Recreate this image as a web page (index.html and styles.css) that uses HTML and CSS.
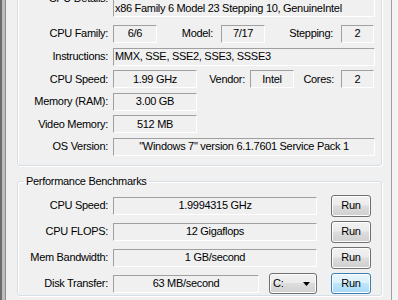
FILE: index.html
```html
<!DOCTYPE html>
<html lang="en">
<head>
  <meta charset="utf-8">
  <title>System Information</title>
  <link rel="stylesheet" href="styles.css">
</head>
<body>
<div class="window">
  <div class="edge-left"></div>
  <div class="panel">
    <!-- System details, scrolled so the heading is off the top -->
    <fieldset class="group group-system">
      <div class="rows">
        <div class="row row-top">
          <span class="lbl lbl-main lbl-high">CPU Details:</span>
          <span class="field w-full left">x86 Family 6 Model 23 Stepping 10, GenuineIntel</span>
        </div>
        <div class="row">
          <span class="lbl lbl-main">CPU Family:</span>
          <span class="field w-44">6/6</span>
          <span class="lbl lbl-model">Model:</span>
          <span class="field w-44">7/17</span>
          <span class="lbl lbl-step">Stepping:</span>
          <span class="field w-33">2</span>
        </div>
        <div class="row">
          <span class="lbl lbl-main">Instructions:</span>
          <span class="field w-full left">MMX, SSE, SSE2, SSE3, SSSE3</span>
        </div>
        <div class="row">
          <span class="lbl lbl-main">CPU Speed:</span>
          <span class="field w-84">1.99 GHz</span>
          <span class="lbl lbl-vendor">Vendor:</span>
          <span class="field w-44">Intel</span>
          <span class="lbl lbl-cores">Cores:</span>
          <span class="field w-33">2</span>
        </div>
        <div class="row">
          <span class="lbl lbl-main">Memory (RAM):</span>
          <span class="field w-84">3.00 GB</span>
        </div>
        <div class="row">
          <span class="lbl lbl-main">Video Memory:</span>
          <span class="field w-84">512 MB</span>
        </div>
        <div class="row">
          <span class="lbl lbl-main">OS Version:</span>
          <span class="field w-full">"Windows 7" version 6.1.7601 Service Pack 1</span>
        </div>
      </div>
    </fieldset>

    <fieldset class="group group-bench">
      <legend>Performance Benchmarks</legend>
      <div class="rows">
        <div class="row">
          <span class="lbl lbl-main">CPU Speed:</span>
          <span class="field w-bench">1.9994315 GHz</span>
          <button class="btn">Run</button>
        </div>
        <div class="row">
          <span class="lbl lbl-main">CPU FLOPS:</span>
          <span class="field w-bench">12 Gigaflops</span>
          <button class="btn">Run</button>
        </div>
        <div class="row">
          <span class="lbl lbl-main">Mem Bandwidth:</span>
          <span class="field w-bench">1 GB/second</span>
          <button class="btn">Run</button>
        </div>
        <div class="row">
          <span class="lbl lbl-main">Disk Transfer:</span>
          <span class="field w-146">63 MB/second</span>
          <span class="combo">C:<svg width="7" height="4" viewBox="0 0 7 4"><path d="M0 0h7L3.5 4z" fill="#000"/></svg></span>
          <button class="btn btn-focus">Run</button>
        </div>
      </div>
    </fieldset>
  </div>
  <div class="edge-right"></div>
</div>
</body>
</html>
```

FILE: styles.css
```css
* { box-sizing: border-box; }

body {
  margin: 0;
  background: #f0f0f0;
  color: #000;
  font: 11px/13px "Liberation Sans", Arial, sans-serif;
  letter-spacing: -0.3px;
}

.window {
  display: flex;
  height: 300px;
  overflow: hidden;
}
.edge-left {
  flex: none;
  width: 6px;
  background: linear-gradient(to right, #6b6b6b 0 2px, #bdbdbd 2px 5px, #8c8c8c 5px 6px);
}
.edge-right {
  flex: none;
  width: 7px;
  background: linear-gradient(to right, #a0a0a0 0 1px, #f4f4f4 1px);
}
.panel {
  flex: 1;
  padding: 0 9px 0 11px;
}

/* group boxes */
.group {
  margin: 0;
  padding: 0;
  min-width: 0;
  border: 1px solid #d5dfe5;
  border-radius: 3px;
  box-shadow: 1px 1px 0 #fff, inset 1px 1px 0 #fff;
}
.group legend {
  margin-left: 6px;
  padding: 0 2px;
  line-height: 13px;
}
.group-system {
  margin-top: -10px;
  padding: 8px 0 9px;
}
.group-system .rows { gap: 4.6px; }
.group-bench {
  margin-top: 9px;
  padding-top: 7px;
}
.group-bench .rows { gap: 4px; }
.group-bench .row { height: 22px; }

.rows {
  display: flex;
  flex-direction: column;
}
.row {
  display: flex;
  align-items: center;
  height: 18px;
}
.row-top { margin-bottom: 3.4px; }

/* labels */
.lbl {
  flex: none;
  white-space: nowrap;
  text-align: right;
}
.lbl-main { width: 95px; padding-right: 5px; }
.lbl-high { align-self: flex-start; margin-top: -7px; }
.lbl-model { width: 64px; padding-right: 8px; }
.lbl-step { width: 76px; padding-right: 8px; }
.lbl-vendor { width: 53px; padding-right: 5px; }
.lbl-cores { width: 47px; padding-right: 7px; }

/* read-only text boxes */
.field {
  flex: none;
  display: flex;
  align-items: center;
  justify-content: center;
  height: 18px;
  border: 1px solid;
  border-color: #a0a0a0 #fff #fff #a0a0a0;
  white-space: nowrap;
  overflow: hidden;
}
.field.left { justify-content: flex-start; padding-left: 1px; }
.w-full { width: 262px; }
.w-84 { width: 84px; }
.w-44 { width: 44px; }
.w-33 { width: 33px; }
.w-bench { width: 204px; }
.w-146 { width: 146px; }

/* buttons */
.btn {
  flex: none;
  width: 40px;
  height: 22px;
  margin-left: 14px;
  padding: 0;
  font: inherit;
  letter-spacing: inherit;
  color: #000;
  border: 1px solid #707070;
  border-radius: 3px;
  background: linear-gradient(#f2f2f2, #ebebeb 45%, #dddddd 50%, #cfcfcf);
  box-shadow: inset 0 0 0 1px #fcfcfc;
}
.btn-focus {
  height: 21px;
  border-color: #3c7fb1;
  background: linear-gradient(#eaf6fd, #d9f0fc 45%, #bee6fd 50%, #a7d9f5);
}

.combo {
  flex: none;
  display: flex;
  align-items: center;
  justify-content: space-between;
  width: 48px;
  height: 21px;
  margin-left: 10px;
  padding: 0 6px 0 3px;
  border: 1px solid #707070;
  border-radius: 3px;
  background: linear-gradient(#f2f2f2, #ebebeb 45%, #dddddd 50%, #cfcfcf);
  box-shadow: inset 0 0 0 1px #fcfcfc;
}
```
